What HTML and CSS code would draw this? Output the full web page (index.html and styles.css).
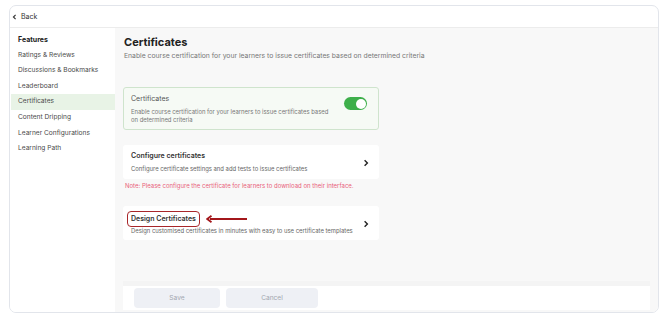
FILE: index.html
```html
<!DOCTYPE html>
<html lang="en">
<head>
    <meta charset="UTF-8">
    <meta name="viewport" content="width=device-width, initial-scale=1.0">
    <title>Certificates</title>
    <link rel="stylesheet" href="styles.css">
</head>
<body>
<div class="frame">
    <div class="topbar">
        <svg class="back-icon" width="5" height="6" viewBox="0 0 5 6"><path d="M3.6 0.8 L1.4 3 L3.6 5.2" fill="none" stroke="#333" stroke-width="1.1"/></svg>
        <span>Back</span>
    </div>
    <div class="layout">
        <div class="sidebar">
            <div class="side-head">Features</div>
            <div class="side-item">Ratings &amp; Reviews</div>
            <div class="side-item">Discussions &amp; Bookmarks</div>
            <div class="side-item">Leaderboard</div>
            <div class="side-item active">Certificates</div>
            <div class="side-item">Content Dripping</div>
            <div class="side-item">Learner Configurations</div>
            <div class="side-item">Learning Path</div>
        </div>
        <div class="main">
            <div class="content">
                <h1 class="page-title">Certificates</h1>
                <p class="page-sub">Enable course certification for your learners to issue certificates based on determined criteria</p>

                <!-- toggle card -->
                <div class="card card-on">
                    <div class="card-text">
                        <div class="card-title light">Certificates</div>
                        <div class="card-desc">Enable course certification for your learners to issue certificates based on determined criteria</div>
                    </div>
                    <div class="toggle"><span class="knob"></span></div>
                </div>

                <div class="card card-link">
                    <div class="card-text">
                        <div class="card-title">Configure certificates</div>
                        <div class="card-desc">Configure certificate settings and add tests to issue certificates</div>
                    </div>
                    <svg class="chevron" width="6" height="8" viewBox="0 0 6 8"><path d="M1.6 1.2 L4.4 4 L1.6 6.8" fill="none" stroke="#222" stroke-width="1.4"/></svg>
                </div>
                <p class="note">Note: Please configure the certificate for learners to download on their interface.</p>

                <div class="card card-link card-design">
                    <div class="card-text">
                        <div class="title-row">
                            <span class="card-title mark">Design Certificates</span>
                            <svg class="arrow" width="42" height="8" viewBox="0 0 42 8"><path d="M41 4 H4" stroke="#a3171b" stroke-width="1.8"/><path d="M5.5 0.8 L1.2 4 L5.5 7.2" fill="none" stroke="#a3171b" stroke-width="1.8"/></svg>
                        </div>
                        <div class="card-desc">Design customised certificates in minutes with easy to use certificate templates</div>
                    </div>
                    <svg class="chevron" width="6" height="8" viewBox="0 0 6 8"><path d="M1.6 1.2 L4.4 4 L1.6 6.8" fill="none" stroke="#222" stroke-width="1.4"/></svg>
                </div>
            </div>
            <div class="footer">
                <button class="btn btn-save">Save</button>
                <button class="btn btn-cancel">Cancel</button>
            </div>
        </div>
    </div>
</div>
</body>
</html>
```

FILE: styles.css
```css
body {
    margin: 0;
    padding: 5px 11px 0 9px;
    background: #ffffff;
    font-family: Inter, "Noto Sans", sans-serif;
    color: #333;
}
.frame {
    height: 306px;
    border: 1px solid #e2e5eb;
    border-radius: 7px;
    overflow: hidden;
    display: flex;
    flex-direction: column;
}
.topbar {
    height: 21px;
    border-bottom: 1px solid #ececec;
    display: flex;
    align-items: center;
    padding-left: 2px;
    font-size: 7px;
    color: #333;
}
.back-icon {
    margin-right: 4px;
}
.layout {
    flex: 1;
    display: flex;
}
.sidebar {
    width: 105px;
    padding-top: 4px;
    background: #fff;
}
.side-head,
.side-item {
    height: 15.6px;
    line-height: 15.6px;
    padding-left: 8px;
    font-size: 6.6px;
    color: #4a4a4a;
}
.side-head {
    font-weight: 700;
    font-size: 7px;
    color: #222;
}
.side-item.active {
    background: #e8f3e6;
    margin-left: 1px;
    padding-left: 7px;
}
.main {
    flex: 1;
    background: #f8f8f8;
    display: flex;
    flex-direction: column;
    padding: 0 8px 2px 8px;
}
.content {
    flex: 1;
    padding-top: 7px;
}
.page-title {
    margin: 0 0 0 1px;
    font-size: 11px;
    font-weight: 700;
    color: #222;
    line-height: 14px;
}
.page-sub {
    margin: 2px 0 0 1px;
    font-size: 6.8px;
    color: #777;
    line-height: 10px;
}
.card {
    width: 256px;
    box-sizing: border-box;
    display: flex;
    align-items: center;
    background: #fff;
    border-radius: 3px;
}
.card-on {
    margin-top: 26px;
    height: 43px;
    background: #f6faf5;
    border: 1px solid #cfe4cd;
    padding: 0 11px 0 7px;
}
.card-link {
    height: 34px;
    padding: 0 10px 0 8px;
    margin-top: 15px;
}
.card-text {
    flex: 1;
}
.card-title {
    font-size: 7px;
    font-weight: 600;
    color: #333;
    line-height: 10px;
}
.card-title.light {
    font-weight: 400;
    color: #555;
}
.card-desc {
    font-size: 5.9px;
    color: #666;
    line-height: 8px;
    margin-top: 4px;
}
.card-on .card-desc {
    width: 205px;
    color: #777;
    margin-top: 4px;
}
.toggle {
    align-self: flex-start;
    margin-top: 9px;
    width: 23px;
    height: 13px;
    border-radius: 7px;
    background: #3daf4a;
    display: flex;
    justify-content: flex-end;
    align-items: center;
    padding-right: 1.5px;
    box-sizing: border-box;
}
.knob {
    width: 10px;
    height: 10px;
    border-radius: 50%;
    background: #fff;
}
.chevron {
    margin-top: 1px;
}
.note {
    margin: 3px 0 0 2px;
    font-size: 6px;
    color: #e8607a;
    line-height: 8px;
}
.card-design {
    margin-top: 16px;
}
.title-row {
    display: flex;
    align-items: center;
    margin-left: -4px;
}
.mark {
    border: 1px solid #a8262a;
    border-radius: 4px;
    padding: 2px 3px;
    line-height: 10px;
}
.arrow {
    margin-left: 6px;
}
.card-design .card-desc {
    margin-top: 0;
}
.footer {
    height: 24px;
    background: #fff;
    display: flex;
    align-items: center;
    gap: 6px;
    padding-left: 11px;
    border-top: 5px solid #f4f4f4;
}
.btn {
    height: 20px;
    border: none;
    border-radius: 4px;
    background: #eef0f5;
    color: #a3a7b0;
    font-family: Inter, "Noto Sans", sans-serif;
    font-size: 6.6px;
    padding: 0;
}
.btn-save {
    width: 86px;
}
.btn-cancel {
    width: 92px;
}
```
